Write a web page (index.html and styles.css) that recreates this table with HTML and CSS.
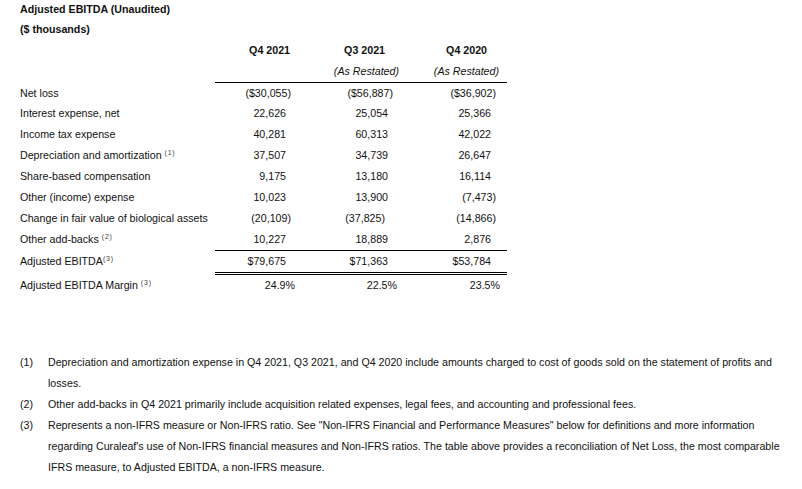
FILE: index.html
```html
<!DOCTYPE html>
<html lang="en">
<head>
<meta charset="utf-8">
<title>Adjusted EBITDA (Unaudited)</title>
<link rel="stylesheet" href="styles.css">
</head>
<body>
<div class="page">
  <h1 class="title">Adjusted EBITDA (Unaudited)</h1>
  <p class="subtitle">($ thousands)</p>

  <div class="table">
    <div class="row head">
      <span class="label"></span>
      <span class="v">Q4 2021</span>
      <span class="v">Q3 2021</span>
      <span class="v">Q4 2020</span>
    </div>
    <div class="row sub">
      <span class="label"></span>
      <span class="v"></span>
      <span class="v">(As Restated)</span>
      <span class="v">(As Restated)</span>
    </div>
    <div class="row rule">
      <span class="label">Net loss</span>
      <span class="v"><span class="neg">($30,055)</span></span>
      <span class="v"><span class="neg">($56,887)</span></span>
      <span class="v"><span class="neg">($36,902)</span></span>
    </div>
    <div class="row">
      <span class="label">Interest expense, net</span>
      <span class="v">22,626</span>
      <span class="v">25,054</span>
      <span class="v">25,366</span>
    </div>
    <div class="row">
      <span class="label">Income tax expense</span>
      <span class="v">40,281</span>
      <span class="v">60,313</span>
      <span class="v">42,022</span>
    </div>
    <div class="row">
      <span class="label">Depreciation and amortization <sup class="fn">(1)</sup></span>
      <span class="v">37,507</span>
      <span class="v">34,739</span>
      <span class="v">26,647</span>
    </div>
    <div class="row">
      <span class="label">Share-based compensation</span>
      <span class="v">9,175</span>
      <span class="v">13,180</span>
      <span class="v">16,114</span>
    </div>
    <div class="row">
      <span class="label">Other (income) expense</span>
      <span class="v">10,023</span>
      <span class="v">13,900</span>
      <span class="v"><span class="neg">(7,473)</span></span>
    </div>
    <div class="row">
      <span class="label">Change in fair value of biological assets</span>
      <span class="v"><span class="neg">(20,109)</span></span>
      <span class="v"><span class="neg-c">(37,825)</span></span>
      <span class="v"><span class="neg">(14,866)</span></span>
    </div>
    <div class="row">
      <span class="label">Other add-backs <sup class="fn">(2)</sup></span>
      <span class="v">10,227</span>
      <span class="v">18,889</span>
      <span class="v">2,876</span>
    </div>
    <div class="row rule total">
      <span class="label">Adjusted EBITDA<sup class="fn">(3)</sup></span>
      <span class="v">$79,675</span>
      <span class="v">$71,363</span>
      <span class="v">$53,784</span>
    </div>
    <div class="row pct">
      <span class="label">Adjusted EBITDA Margin <sup class="fn">(3)</sup></span>
      <span class="v">24.9%</span>
      <span class="v">22.5%</span>
      <span class="v">23.5%</span>
    </div>
  </div>

  <ol class="notes">
    <li class="note"><span class="num">(1)</span><span class="text">Depreciation and amortization expense in Q4 2021, Q3 2021, and Q4 2020 include amounts charged to cost of goods sold on the statement of profits and losses.</span></li>
    <li class="note"><span class="num">(2)</span><span class="text">Other add-backs in Q4 2021 primarily include acquisition related expenses, legal fees, and accounting and professional fees.</span></li>
    <li class="note"><span class="num">(3)</span><span class="text">Represents a non-IFRS measure or Non-IFRS ratio. See &quot;Non-IFRS Financial and Performance Measures&quot; below for definitions and more information regarding Curaleaf's use of Non-IFRS financial measures and Non-IFRS ratios. The table above provides a reconciliation of Net Loss, the most comparable IFRS measure, to Adjusted EBITDA, a non-IFRS measure.</span></li>
  </ol>
</div>
</body>
</html>
```

FILE: styles.css
```css
* {
  box-sizing: border-box;
}

html, body {
  margin: 0;
  padding: 0;
  background: #ffffff;
}

body {
  font-family: "Liberation Sans", Arial, sans-serif;
  font-size: 10.667px;
  color: #111111;
}

.page {
  padding-left: 20px;
  width: 802px;
}

.title {
  margin: 0;
  font-size: 10.667px;
  font-weight: bold;
  line-height: 19px;
}

.subtitle {
  margin: 0;
  font-weight: bold;
  line-height: 21px;
}

.table {
  display: flex;
  flex-direction: column;
}

.row {
  display: grid;
  grid-template-columns: 195px 105px 100px 87px;
  line-height: 21px;
  height: 21px;
  white-space: nowrap;
}

.v {
  text-align: right;
}

.row > .v:nth-child(2) { padding-right: 34px; }
.row > .v:nth-child(3) { padding-right: 32px; }
.row > .v:nth-child(4) { padding-right: 16px; }

.head {
  font-weight: bold;
}
.head > .v:nth-child(2) { padding-right: 30px; }
.head > .v:nth-child(3) { padding-right: 35px; }
.head > .v:nth-child(4) { padding-right: 20px; }

.sub {
  font-style: italic;
}
.sub > .v:nth-child(3) { padding-right: 21px; }
.sub > .v:nth-child(4) { padding-right: 8px; }

.pct > .v:nth-child(2) { padding-right: 25px; }
.pct > .v:nth-child(3) { padding-right: 23px; }
.pct > .v:nth-child(4) { padding-right: 7px; }

.rule > * {
  border-top: 1px solid transparent;
  line-height: 20px;
}
.rule > .v {
  border-top-color: #000000;
}

.total {
  height: 25px;
}
.total > * {
  line-height: 21px;
  border-bottom: 3px double transparent;
}
.total > .v {
  border-bottom-color: #000000;
}

.neg {
  margin-right: -5px;
}

.neg-c {
  margin-right: 3px;
}

.fn {
  font-size: 7px;
  letter-spacing: 0.8px;
  line-height: 0;
  vertical-align: 4px;
  color: #444444;
}

.notes {
  list-style: none;
  margin: 56px 0 0 0;
  padding: 0;
  width: 770px;
  line-height: 21px;
}

.note {
  display: grid;
  grid-template-columns: 28px 1fr;
}
```
